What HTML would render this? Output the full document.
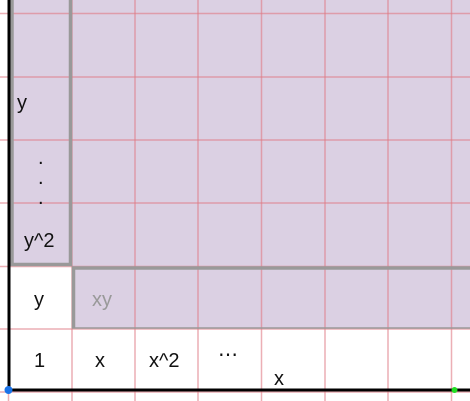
<!DOCTYPE html>
<html><head><style>
body{margin:0;width:470px;height:401px;overflow:hidden;background:#fff;position:relative;font-family:"Liberation Sans",sans-serif}
.t{position:absolute;font-size:20px;color:#111;line-height:1}
</style></head><body>
<svg width="470" height="401" style="position:absolute;left:0;top:0">
<rect x="72" y="0" width="398" height="328" fill="#dbd0e3"/>
<rect x="10" y="0" width="61" height="265" fill="#dbd0e3"/>
<g stroke="#e07a84" stroke-opacity="0.6" stroke-width="1.5">
<line x1="8.5" y1="0" x2="8.5" y2="401"/>
<line x1="72" y1="0" x2="72" y2="401"/>
<line x1="135" y1="0" x2="135" y2="401"/>
<line x1="198" y1="0" x2="198" y2="401"/>
<line x1="261.5" y1="0" x2="261.5" y2="401"/>
<line x1="325" y1="0" x2="325" y2="401"/>
<line x1="388" y1="0" x2="388" y2="401"/>
<line x1="451.5" y1="0" x2="451.5" y2="401"/>
<line x1="0" y1="13.5" x2="470" y2="13.5"/>
<line x1="0" y1="77" x2="470" y2="77"/>
<line x1="0" y1="140" x2="470" y2="140"/>
<line x1="0" y1="203" x2="470" y2="203"/>
<line x1="0" y1="266.5" x2="470" y2="266.5"/>
<line x1="0" y1="329" x2="470" y2="329"/>
<line x1="0" y1="392" x2="470" y2="392"/>
</g>
<g stroke="#999" fill="none">
<path d="M12 0V264.5H70.5V0" stroke-width="3.5"/>
<path d="M73.5 328V268H470" stroke-width="3.5"/>
<line x1="72" y1="328" x2="470" y2="328" stroke-width="1.5"/>
</g>
<line x1="9" y1="0" x2="9" y2="391" stroke="#000" stroke-width="3"/>
<line x1="8" y1="390" x2="470" y2="390" stroke="#000" stroke-width="3"/>
<circle cx="8.5" cy="390" r="4" fill="#1a73e8"/>
<circle cx="454.5" cy="390" r="3" fill="#22dd22"/>
</svg>
<div class="t" style="left:17px;top:93px">y</div>
<div class="t" style="left:38px;top:148px">.</div>
<div class="t" style="left:38px;top:168px">.</div>
<div class="t" style="left:38px;top:188px">.</div>
<div class="t" style="left:24px;top:231px">y^2</div>
<div class="t" style="left:34px;top:290px">y</div>
<div class="t" style="left:92px;top:290px;color:#999">xy</div>
<div class="t" style="left:34px;top:351px">1</div>
<div class="t" style="left:95px;top:351px">x</div>
<div class="t" style="left:149px;top:351px">x^2</div>
<div class="t" style="left:218px;top:345px">⋯</div>
<div class="t" style="left:274px;top:369px">x</div>
</body></html>
